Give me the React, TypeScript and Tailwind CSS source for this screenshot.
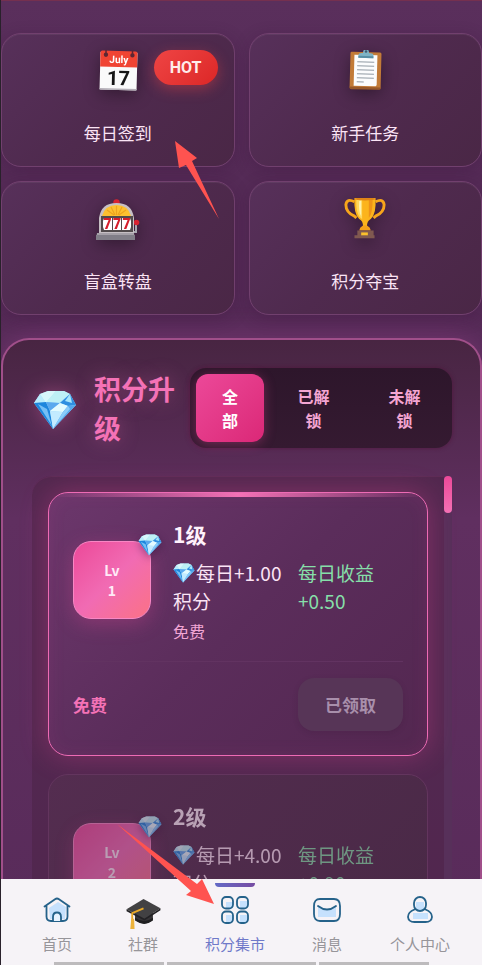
import type { ReactNode } from "react";

function Gem({ className }: { className: string }) {
  return (
    <svg viewBox="0 0 44 40" className={className} aria-hidden="true">
      <path d="M7 4 15 1h16l6 3 6 11-23 24L1 13Z" fill="#9bd8fa" />
      <path d="m1 13 6-9 6 9Z" fill="#b9ecfb" />
      <path d="M7 4 15 1h8L13 13Z" fill="#d7f7fb" />
      <path d="M23 1 13 12l13 1L37 4l-6-3Z" fill="#bdf0f5" />
      <path d="M37 4 27 13l8 3 8-1Z" fill="#2f8fe0" />
      <path d="m37 4-5 7 7 2Z" fill="#a8e6fb" />
      <path d="m1 13 12-1 4 9 3 18Z" fill="#1d86dd" />
      <path d="m5 14 9 5 5 17Z" fill="#75bff5" />
      <path d="m13 12 14 1-10 8Z" fill="#5aa9ee" />
      <path d="m27 13-10 8 13 1 5-6Z" fill="#e3fbff" />
      <path d="m17 21 13 1-10 17Z" fill="#c3ebff" />
      <path d="m30 22 5-6 8-1-23 24Z" fill="#54a8ed" />
      <path d="m30 22 5-6 2 3-17 20Z" fill="#8accfa" />
    </svg>
  );
}

function CalendarIcon() {
  return (
    <svg viewBox="0 0 44 44" className="size-11 drop-shadow-[0_4px_8px_rgba(0,0,0,0.35)]" aria-hidden="true">
      <g transform="rotate(1.5 22 22)">
        <rect x="4" y="2" width="37" height="38" rx="1" fill="#fafafa" />
        <path d="M4 3q0-2 2-2h33q2 0 2 2v14H4Z" fill="#f04433" />
        <path d="M4 38.500h37v1.500H4Z" fill="#b5b0b8" />
        <circle cx="9.500" cy="5" r="2.200" fill="#5d2733" />
        <circle cx="36" cy="5" r="2.200" fill="#5d2733" />
        <path d="M9.500 0v5M36 0v5" stroke="#5d2733" strokeWidth="1.500" />
        <text x="22.500" y="13" textAnchor="middle" fontSize="10" fontWeight="700" fontFamily="Roboto, sans-serif" fill="#fff">July</text>
        <text x="22.500" y="35" textAnchor="middle" fontSize="20" fontWeight="700" fontFamily="Roboto, sans-serif" fill="#151515">17</text>
      </g>
    </svg>
  );
}

function ClipboardIcon() {
  return (
    <svg viewBox="0 0 44 44" className="size-11 drop-shadow-[0_4px_8px_rgba(0,0,0,0.35)]" aria-hidden="true">
      <g transform="rotate(1.500 22 22)">
        <rect x="7" y="2" width="31" height="37" rx="1.500" fill="#c27b38" />
        <path d="M7 37h31v1q0 1.500-1.500 1.500h-28Q7 39.500 7 38Z" fill="#98592a" />
        <path d="M11 5h23v30l-1 1H11Z" fill="#fbfcfd" />
        <path d="M14 12h17M14 16h17M14 20h17M14 24h17M14 28h17M14 32h7" stroke="#919ba4" strokeWidth="1" />
        <path d="M15 8V5q0-2 3-2h1.500q0-4 3-4t3 4H27q3 0 3 2v3Z" fill="#7fb4c6" />
        <circle cx="22.500" cy="1.500" r="1.300" fill="#3f5b70" />
        <path d="M15 6h15v2H15Z" fill="#588fa5" />
      </g>
    </svg>
  );
}

function SlotIcon() {
  return (
    <svg viewBox="0 0 44 44" className="size-11 drop-shadow-[0_4px_8px_rgba(0,0,0,0.35)]" aria-hidden="true">
      <circle cx="20.500" cy="4.500" r="3.200" fill="#d72231" />
      <path d="M37 34h3V25" fill="none" stroke="#a8a8b0" strokeWidth="2" />
      <circle cx="40.500" cy="24.500" r="2.800" fill="#d72231" />
      <path d="M3 36V20Q5 5 20.500 5T38 20v16Z" fill="#c6bfc4" />
      <path d="M6 18Q9 7 20.500 7T35 18Z" fill="#fdc02f" />
      <path d="m18 17-7-5M19 17l-4-8M20.500 17V8M22 17l4-8M23 17l7-5" stroke="#eda31e" strokeWidth="1.200" />
      <path d="M5 18h32v16H5Z" fill="#514a4c" />
      <path d="M8 20h8v12H8l-1-3v-6ZM17 20h8v12h-8zM26 20h8l1 3v6l-1 3h-8Z" fill="#fff" />
      <g fontSize="14" fontWeight="900" fontFamily="Roboto, sans-serif" fill="#d51e2c" textAnchor="middle">
        <text x="11.500" y="31">7</text>
        <text x="21" y="31">7</text>
        <text x="30.500" y="31">7</text>
      </g>
      <path d="M1 35h37l1 7H0Z" fill="#a5a0a8" />
      <path d="M0 37h39v5H0Z" fill="#817e88" />
    </svg>
  );
}

function TrophyIcon() {
  return (
    <svg viewBox="0 2 46 46" className="size-11 drop-shadow-[0_4px_8px_rgba(0,0,0,0.35)]" aria-hidden="true">
      <g transform="translate(1 0)">
        <path d="M11 6Q3 2 2 9q0 8 9 12l2 2" fill="none" stroke="#f7a51b" strokeWidth="3" />
        <path d="M33 6q8-4 9 3 0 8-9 12l-2 2" fill="none" stroke="#f7a51b" strokeWidth="3" />
        <path d="M11 2h22q1 17-5 22-4 2-4 8h-4q0-6-4-8-6-5-5-22Z" fill="#fcb41c" />
        <path d="M13 3h6v21q-7-4-6-21Z" fill="#ffd65c" />
        <path d="M16 5h2v16q-3-4-2-16Z" fill="#fff1ae" />
        <path d="M26 4h4q0 14-4 19Z" fill="#ee9318" />
        <ellipse cx="22" cy="3" rx="11" ry="1.500" fill="#df8416" />
        <path d="M17 33q5-5 10 0l1 3H16Z" fill="#f5a11a" />
        <path d="M14 36h17v5h1v3H11v-3h3Z" fill="#805950" />
        <path d="M18 38h7v3h-7Z" fill="#fbc12c" />
      </g>
    </svg>
  );
}

const features: { label: string; icon: ReactNode; hot?: boolean }[] = [
  { label: "每日签到", icon: <CalendarIcon />, hot: true },
  { label: "新手任务", icon: <ClipboardIcon /> },
  { label: "盲盒转盘", icon: <SlotIcon /> },
  { label: "积分夺宝", icon: <TrophyIcon /> },
];

function FeatureCard({ label, icon, hot }: { label: string; icon: ReactNode; hot?: boolean }) {
  return (
    <button
      type="button"
      className="relative flex flex-col items-center rounded-[20px] border border-[#71406e] bg-linear-135 from-[#57305a] via-[#4f2a4e] to-[#4a2746] px-4 pt-4 pb-5 shadow-[0_4px_16px_rgba(50,15,50,0.25),inset_0_1px_0_rgba(255,255,255,0.06)]"
    >
      {icon}
      <span className="mt-[26px] text-[17px] leading-[26px] text-[#fbe4f5]">{label}</span>
      {hot && (
        <span className="absolute top-4 right-4 rounded-full bg-linear-135 from-[#ef4444] to-[#dc2626] px-4 font-[Roboto,sans-serif] text-base leading-[35px] font-bold text-[#ffeceb] shadow-[0_4px_14px_rgba(239,68,68,0.4)]">
          HOT
        </span>
      )}
    </button>
  );
}

function LevelCard({ level, daily, income, unlocked }: { level: number; daily: string; income: string; unlocked?: boolean }) {
  return (
    <article
      className={
        unlocked
          ? "relative overflow-hidden rounded-[20px] border border-[#ee6bb5] bg-linear-135 from-[#6c376c] via-[#5b2d5b] to-[#532750] p-6 shadow-[0_0_28px_rgba(236,72,153,0.32),inset_0_0_18px_rgba(236,72,153,0.09)]"
          : "relative overflow-hidden rounded-[20px] border border-[#63355e] bg-linear-135 from-[#542d50] to-[#472844] p-6"
      }
    >
      {unlocked && <div className="absolute inset-x-0 top-0 h-1 bg-linear-to-r from-transparent via-[#f472b6] to-transparent" />}
      <div className={unlocked ? "" : "opacity-60"}>
        <div className="flex items-center gap-[22px]">
          <div className="relative flex size-[78px] shrink-0 flex-col items-center justify-center rounded-[18px] border border-[#f887c4] bg-linear-135 from-[#ec4899] via-[#f16bb3] to-[#fb7185] text-sm leading-5 font-bold text-[#ffeaf7] shadow-[0_5px_20px_rgba(236,72,153,0.3)]">
            <span>Lv</span>
            <span>{level}</span>
            <Gem className="absolute -top-2 -right-3 w-6 drop-shadow-[0_3px_4px_rgba(40,10,50,0.4)]" />
          </div>
          <div className="min-w-0 flex-1">
            <h3 className="text-[21px] leading-[34px] font-bold text-[#fff2fc]">{`${level}级`}</h3>
            <div className="mt-2 grid grid-cols-[110fr_105fr] gap-[15px] text-[19px] leading-7">
              <p className="text-[#fbe4f5]">
                <span className="flex items-center whitespace-nowrap">
                  <Gem className="mr-px w-[22px] shrink-0" />
                  {`每日+${daily}`}
                </span>
                <span className="block">积分</span>
              </p>
              <p className="text-[#86dfa9]">{`每日收益 +${income}`}</p>
            </div>
            <p className="mt-1 text-base leading-6 text-[#f2a6d5]">免费</p>
          </div>
        </div>
        <div className="mt-[18px] flex items-center justify-between border-t border-[#623361] pt-4">
          <strong className="text-[17px] leading-6 font-bold text-[#f472b6]">免费</strong>
          <button type="button" disabled className="rounded-2xl bg-[#573557] px-[27px] py-[14px] text-[17px] leading-[25px] font-bold text-[#a88fab] shadow-[0_2px_6px_rgba(30,10,30,0.1)]">
            已领取
          </button>
        </div>
      </div>
    </article>
  );
}

const iconLine = { stroke: "#25628a", strokeWidth: 1.8, strokeLinecap: "round", strokeLinejoin: "round" } as const;

function HomeIcon() {
  return (
    <svg viewBox="0 0 28 28" className="size-7" fill="none" aria-hidden="true">
      <path d="m6 12 9-6 8 5-1 12H7Z" fill="#c6e1fd" />
      <path d="M1.500 10.500 12 3.200q2-1.400 4 0l10.500 7.300M3.500 10v10.500q0 4.500 4.500 4.500h12q4.500 0 4.500-4.500V10" {...iconLine} />
      <path d="M10 25v-4q0-4.500 4-4.500t4 4.500v4" fill="#e8f3ff" {...iconLine} />
    </svg>
  );
}

function CapIcon() {
  return (
    <svg viewBox="0 0 36 34" className="mt-2 h-8 w-[35px]" aria-hidden="true">
      <path d="M9 14v9q10 8 19 0v-9Z" fill="#363437" />
      <path d="M9 21q10 7 19 0v3q-9 7-19 0Z" fill="#202022" />
      <path d="M0 12 18 1l18 10-17 11Z" fill="#424143" />
      <path d="m0 12 19 10 17-11v2L19 24 0 14Z" fill="#222124" />
      <path d="m18 11-12 5v9" fill="none" stroke="#e9a928" strokeWidth="2" />
      <path d="M5 22h3l.5 11H4Z" fill="#edb33c" />
    </svg>
  );
}

function MarketIcon() {
  return (
    <svg viewBox="0 0 28 28" className="size-7" fill="none" aria-hidden="true">
      <path d="M5 6h7v6H5zM19 5h7v7h-7zM5 19h7v7H5zM19 19h7v7h-7z" fill="#c6e1fd" />
      <rect x="1" y="1" width="11" height="11.500" rx="4" {...iconLine} />
      <rect x="16" y="1" width="11" height="11.500" rx="4" {...iconLine} />
      <rect x="1" y="15.500" width="11" height="11.500" rx="4" {...iconLine} />
      <rect x="16" y="15.500" width="11" height="11.500" rx="4" {...iconLine} />
    </svg>
  );
}

function MailIcon() {
  return (
    <svg viewBox="0 0 28 28" className="size-7" fill="none" aria-hidden="true">
      <path d="M5 10q9 9 18-1v12H5Z" fill="#c6e1fd" />
      <path d="M7 3h14q6 0 6 7v8q0 7-6 7H7q-6 0-6-7v-8q0-7 6-7Z" {...iconLine} />
      <path d="M5 10q9 7 18 0" {...iconLine} />
    </svg>
  );
}

function PersonIcon() {
  return (
    <svg viewBox="0 0 28 28" className="size-7" fill="none" aria-hidden="true">
      <path d="M10 6h8v8h-8zM7 17h15v6H7z" fill="#c6e1fd" />
      <rect x="8" y="1" width="12" height="14" rx="6" {...iconLine} />
      <path d="M8.500 13.500Q2 16 2 21q.5 5 6.500 5h11q6 0 6.500-5 0-5-6.500-7.500" {...iconLine} />
    </svg>
  );
}

const navItems: { label: string; icon: ReactNode; active?: boolean }[] = [
  { label: "首页", icon: <HomeIcon /> },
  { label: "社群", icon: <CapIcon /> },
  { label: "积分集市", icon: <MarketIcon />, active: true },
  { label: "消息", icon: <MailIcon /> },
  { label: "个人中心", icon: <PersonIcon /> },
];

const tabs = ["全部", "已解锁", "未解锁"];

export default function App() {
  return (
    <div className="relative flex h-screen flex-col overflow-hidden border-l border-[#29212b] bg-[#582d58] font-['Noto_Sans_CJK_SC','Noto_Sans',sans-serif]">
      <main className="min-h-0 flex-1 overflow-hidden border-t border-[#75304f] bg-linear-to-b from-[#5a2f5c] via-[#552b57] via-20% to-[#582b5a] pt-8">
        <section className="grid grid-cols-2 gap-[14px]" aria-label="积分活动">
          {features.map((f) => (
            <FeatureCard key={f.label} {...f} />
          ))}
        </section>

        <section className="mt-[23px] rounded-t-[28px] border-2 border-b-0 border-[#a04f8a] bg-linear-to-b from-[#482542] via-[#602f60] via-25% to-[#562a58] pt-7 pr-7 pl-[29px] shadow-[0_0_30px_rgba(190,80,170,0.3)]">
          <header className="flex items-center">
            <Gem className="mt-1 mr-4 w-[46px] shrink-0 px-px drop-shadow-[0_0_10px_rgba(244,114,182,0.35)]" />
            <h2 className="min-w-0 flex-1 text-[27px] leading-[39px] font-bold text-[#f472b6] [text-shadow:0_0_20px_rgba(244,114,182,0.35)]">积分升级</h2>
            <div role="tablist" className="ml-[14px] grid w-[262px] shrink-0 grid-cols-[68fr_83fr_83fr] gap-2 rounded-2xl bg-linear-to-b from-[#2d162b] to-[#351a31] p-[6px] shadow-[0_0_4px_rgba(80,15,55,0.7)]">
              {tabs.map((tab, i) => (
                <button
                  key={tab}
                  type="button"
                  role="tab"
                  aria-selected={i === 0}
                  className={
                    i === 0
                      ? "rounded-xl bg-linear-135 from-[#ec4899] to-[#db2777] px-6 py-[10px] text-base leading-6 font-bold text-white shadow-[0_2px_12px_rgba(236,72,153,0.35)]"
                      : "rounded-xl px-6 py-[10px] text-base leading-6 font-bold text-[#f4a5d2]"
                  }
                >
                  {tab}
                </button>
              ))}
            </div>
          </header>

          <div className="mt-7 flex">
            <div className="min-w-0 flex-1 space-y-[18px] rounded-tl-[20px] bg-[#4d2448]/60 p-4 shadow-[inset_0_1px_0_rgba(130,60,110,0.25)]">
              <LevelCard level={1} daily="1.00" income="0.50" unlocked />
              <LevelCard level={2} daily="4.00" income="0.90" />
            </div>
            <div className="w-2 shrink-0 bg-[#57305a]">
              <div className="h-[37px] rounded-full bg-linear-to-b from-[#ec4899] to-[#f472b6]" />
            </div>
          </div>
        </section>
      </main>

      <nav className="shrink-0 bg-[#f6f3f7]">
        <div className="grid h-[83px] grid-cols-[86fr_86fr_98fr_86fr_100fr] pr-3 pl-[13px]">
          {navItems.map((item) => (
            <a
              key={item.label}
              href="#"
              aria-current={item.active ? "page" : undefined}
              className={
                item.active
                  ? "relative flex flex-col items-center pt-[13px] text-[#6f79c9]"
                  : "relative flex flex-col items-center pt-[13px] text-[#97959a]"
              }
            >
              {item.active && <span className="absolute top-1 h-1 w-10 rounded-b bg-linear-to-r from-[#6269c6] to-[#764ba2]" />}
              <span className="flex h-9 items-center">{item.icon}</span>
              <span className="mt-1 text-[15px] leading-6">{item.label}</span>
            </a>
          ))}
        </div>
        <div className="flex h-[3px] gap-[3px] px-[53px]">
          <span className="flex-[110] bg-[#bdbbbd]" />
          <span className="flex-[150] bg-[#bdbbbd]" />
          <span className="flex-[110] bg-[#bdbbbd]" />
        </div>
      </nav>

      <svg viewBox="0 0 45 79" className="absolute top-[141px] left-[174px] h-[79px] w-[45px]" aria-hidden="true">
        <path d="m0 0 22 17-5 3 27 58L11 24l-7 3Z" fill="#ff5350" />
      </svg>
      <svg viewBox="0 0 97 82" className="absolute top-[823px] left-[116px] h-[82px] w-[97px]" aria-hidden="true">
        <path d="m0 1 80 60 5-5 12 25-28-9 5-4Z" fill="#ff5350" />
      </svg>
    </div>
  );
}
